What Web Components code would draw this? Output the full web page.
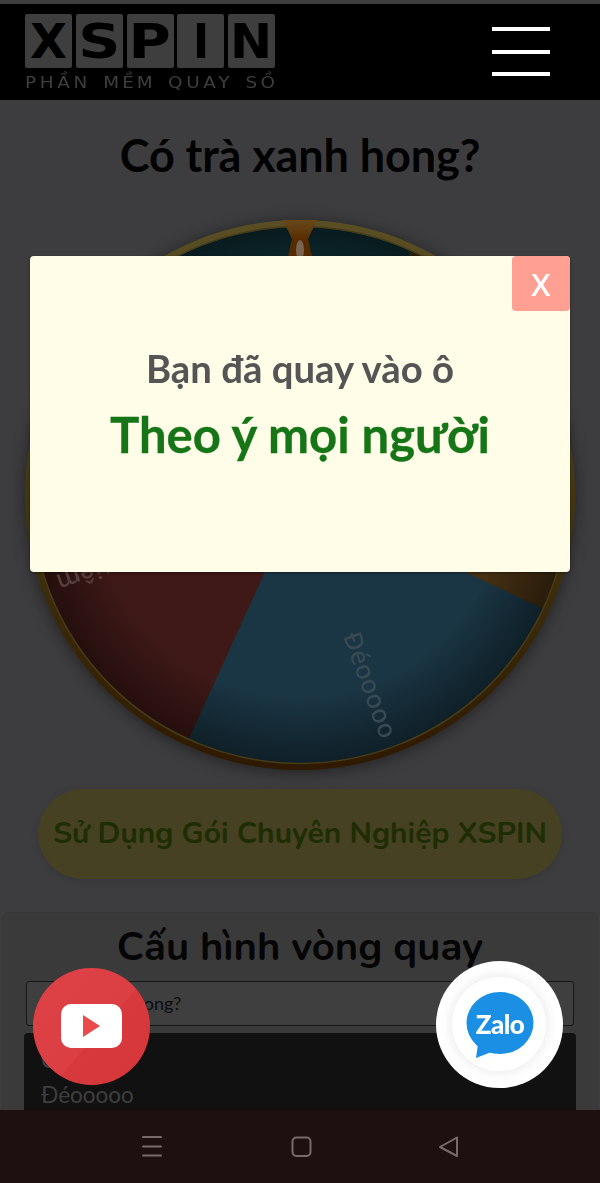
<!DOCTYPE html>
<html lang="vi">
<head>
<meta charset="utf-8">
<title>XSPIN</title>
<style>
  html,body{margin:0;padding:0;height:1183px;overflow:hidden;background:#7a7a7e;font-family:"Lato","Noto Sans",sans-serif;}
  body{display:flex;flex-direction:column;}
</style>
</head>
<body>
<app-header></app-header>
<page-title>Có trà xanh hong?</page-title>
<lucky-wheel></lucky-wheel>
<pro-button>Sử Dụng Gói Chuyên Nghiệp XSPIN</pro-button>
<config-card></config-card>
<result-modal></result-modal>
<float-youtube></float-youtube>
<float-zalo></float-zalo>
<nav-bar></nav-bar>
<script>
function def(name, html){
  customElements.define(name, class extends HTMLElement{
    constructor(){super();this.attachShadow({mode:'open'}).innerHTML=html;}
  });
}
def('app-header',`<style>
:host{display:flex;flex:none;margin-top:4px;height:96px;background:#000;justify-content:space-between;align-items:flex-start;padding:10px 50px 0 25px;box-sizing:border-box;}
.logo{display:flex;flex-direction:column;width:250px;}
.tiles{display:flex;justify-content:space-between;height:54px;}
.t{width:47px;height:54px;background:#7c7c7c;border-radius:2px;display:flex;align-items:center;justify-content:center;color:#000;font:700 48px/54px "DejaVu Sans",sans-serif;}
.t span{display:block;transform:scaleX(var(--sx,1));}
.tag{display:flex;justify-content:space-between;width:217.4px;margin-top:5px;color:#7c7c7c;font:400 16px/20px "DejaVu Sans",sans-serif;transform:scaleX(1.15);transform-origin:left;}
.tag span{letter-spacing:3.2px;}
.tag span.m{letter-spacing:2.6px;}
.tag span:last-child{letter-spacing:3px;margin-right:-3px;}
.burger{position:relative;z-index:20;display:flex;flex-direction:column;justify-content:space-between;width:58px;height:49px;margin-top:13px;}
.burger i{display:block;height:4px;background:#fff;}
</style>
<div class="logo"><div class="tiles"><div class="t"><span>X</span></div><div class="t" style="--sx:1.22"><span>S</span></div><div class="t" style="--sx:1.2"><span>P</span></div><div class="t" style="--sx:.9"><span>I</span></div><div class="t" style="--sx:1.05"><span>N</span></div></div>
<div class="tag"><span>PHẦN</span><span class="m">MỀM</span><span>QUAY</span><span>SỒ</span></div></div>
<div class="burger"><i></i><i></i><i></i></div>`);
def('page-title',`<style>
:host{display:block;flex:none;height:120px;text-align:center;color:#050505;font:700 45px/110px "Lato",sans-serif;letter-spacing:-.1px;}
</style><slot></slot>`);
def('lucky-wheel',`<style>
:host{display:block;flex:none;width:550px;height:550px;margin-left:25px;}
svg{display:block;overflow:visible;filter:drop-shadow(0 2px 8px rgba(0,0,0,.45));}
text{font:500 25.5px "Noto Sans",sans-serif;fill:#6e92a6;}
</style>
<svg width="550" height="550" viewBox="-275 -275 550 550">
<defs>
<linearGradient id="rim" x1="0" y1="0" x2="0" y2="1"><stop offset="0" stop-color="#b49c48"/><stop offset=".55" stop-color="#84681e"/><stop offset="1" stop-color="#5e3200"/></linearGradient>
<linearGradient id="pt" x1="0" y1="0" x2="0" y2="1"><stop offset="0" stop-color="#d09238"/><stop offset=".5" stop-color="#b05800"/><stop offset="1" stop-color="#a85400"/></linearGradient>
<radialGradient id="shade"><stop offset=".76" stop-color="#000" stop-opacity="0"/><stop offset="1" stop-color="#000" stop-opacity=".4"/></radialGradient>
<clipPath id="face"><circle r="268"/></clipPath>
</defs>
<circle r="275" fill="url(#rim)"/>
<g clip-path="url(#face)">
<path d="M0 0L253 118A279 279 0 0 1-116 254Z" fill="#346a86"/>
<path d="M0 0L-116 254A279 279 0 0 1-254-116Z" fill="#7c322e"/>
<path d="M0 0L-254-116A279 279 0 0 1 116-254Z" fill="#1c5c66"/>
<path d="M0 0L116-254A279 279 0 0 1 253 118Z" fill="#8c5e26"/>
</g>
<circle r="268" fill="url(#shade)"/>
<circle r="268.5" fill="none" stroke="#8c7630" stroke-width="1.5"/>
<g transform="rotate(70)"><text x="258" y="8" text-anchor="end">Đéooooo</text></g>
<g transform="rotate(160)"><text x="258" y="8" text-anchor="end" style="fill:#a87c78">Ra tiệm</text></g>
<path d="M-17-275L17-275L8-256L13-234L-13-234L-8-256Z" fill="url(#pt)"/>
<ellipse cx="0" cy="-245" rx="4" ry="10" fill="#f0c8a0"/>
</svg>`);
def('pro-button',`<style>
:host{display:flex;flex:none;align-items:center;justify-content:center;width:524px;height:90px;margin:19px 0 0 38px;border-radius:45px;background:#8a8244;color:#3e5a08;font:700 30px/1 "Nunito","Noto Sans",sans-serif;box-shadow:0 2px 8px rgba(0,0,0,.12);white-space:nowrap;}
</style><slot></slot>`);
def('config-card',`<style>
:host{display:block;flex:1;min-height:0;overflow:hidden;margin:33px 2px 0;padding:0 22px;background:#747476;border:1px solid #6e6e70;border-bottom:0;border-radius:6px 6px 0 0;box-sizing:border-box;}
h2{margin:0;text-align:center;color:#0a0a0a;font:700 40px/68px "Nunito","Noto Sans",sans-serif;white-space:nowrap;}
.in{box-sizing:border-box;height:45px;margin:0 1px;border:1px solid #2c2c2c;border-radius:3px;background:#7e7e80;padding:0 11px;color:#1a1a1a;font:400 18px/43px "Lato",sans-serif;}
.ta{box-sizing:border-box;height:160px;margin:7px -1px 0;padding:9px 17px;background:#222;border-radius:4px;color:#7c7c7c;font:400 22.5px/35px "Lato",sans-serif;}
</style>
<h2>Cấu hình vòng quay</h2>
<div class="in">Có trà xanh hong?</div>
<div class="ta">Có<br>Đéooooo</div>`);
def('result-modal',`<style>
:host{position:fixed;inset:0;z-index:10;display:block;background:rgba(0,0,0,.5);}
.box{position:relative;box-sizing:border-box;width:540px;height:316px;margin:256px 0 0 30px;background:#fffde8;border-radius:4px;text-align:center;padding-top:87px;box-shadow:0 1px 3px rgba(0,0,0,.4);}
.a{color:#555;font:700 38.3px/50px "Lato",sans-serif;}
.b{color:#167516;font:700 49px/80px "Lato",sans-serif;margin-top:1px;-webkit-text-stroke:.3px #167516;}
.x{position:absolute;top:0;right:0;width:58px;height:55px;background:#ffa092;border-radius:4px;color:#fff;font:600 31px/57px "Open Sans",sans-serif;}
</style>
<div class="box"><div class="x">X</div><div class="a">Bạn đã quay vào ô</div><div class="b">Theo ý mọi người</div></div>`);
def('float-youtube',`<style>
:host{position:fixed;left:33px;top:968px;z-index:20;display:block;width:117px;height:117px;}
svg{display:block;}
</style>
<svg width="117" height="117" viewBox="0 0 117 117">
<defs><clipPath id="c"><circle cx="58.5" cy="58.5" r="58.5"/></clipPath>
<linearGradient id="d" x1="0" y1="0" x2="1" y2="1"><stop offset="0" stop-color="#dc3c40"/><stop offset="1" stop-color="#d4363a"/></linearGradient></defs>
<circle cx="58.5" cy="58.5" r="58.5" fill="url(#d)"/>
<path clip-path="url(#c)" d="M20 117L117 5L0-10L-10 117Z" fill="#e85558" fill-opacity=".25"/>
<rect x="28" y="36" width="61" height="44" rx="10" fill="#fff"/>
<path d="M50 47L67 58L50 69Z" fill="#ea4a4c"/>
</svg>`);
def('float-zalo',`<style>
:host{position:fixed;left:436px;top:961px;z-index:20;display:block;width:127px;height:127px;border-radius:50%;background:#fff;}
.ring{position:absolute;left:16px;top:16px;width:94px;height:94px;border-radius:50%;background:#fff;box-shadow:0 0 12px 2px #ececec;}
svg{position:absolute;left:30px;top:31px;}
.z{position:absolute;left:30px;top:32px;width:68px;height:62px;text-align:center;color:#fff;font:900 26px/62px "Lato",sans-serif;letter-spacing:-.6px;}
</style>
<div class="ring"></div>
<svg width="68" height="70" viewBox="0 0 68 70"><ellipse cx="34" cy="31" rx="33.5" ry="31" fill="#1a8fe3"/><path d="M12 52L10 66L28 59Z" fill="#1a8fe3"/></svg>
<div class="z">Zalo</div>`);
def('nav-bar',`<style>
:host{position:fixed;left:0;right:0;bottom:0;z-index:30;height:73px;display:block;background:#1e1010;}
svg{display:block;}
</style>
<svg width="600" height="73" viewBox="0 0 600 73" fill="none" stroke="#786a6a" stroke-width="2" stroke-linecap="round" stroke-linejoin="round">
<path d="M143 27H161M143 36.5H161M143 45.5H161"/>
<rect x="292.5" y="27.5" width="18" height="18.5" rx="4"/>
<path d="M457 27.5L440 37L457 46Z"/>
</svg>`);
</script>
</body>
</html>
